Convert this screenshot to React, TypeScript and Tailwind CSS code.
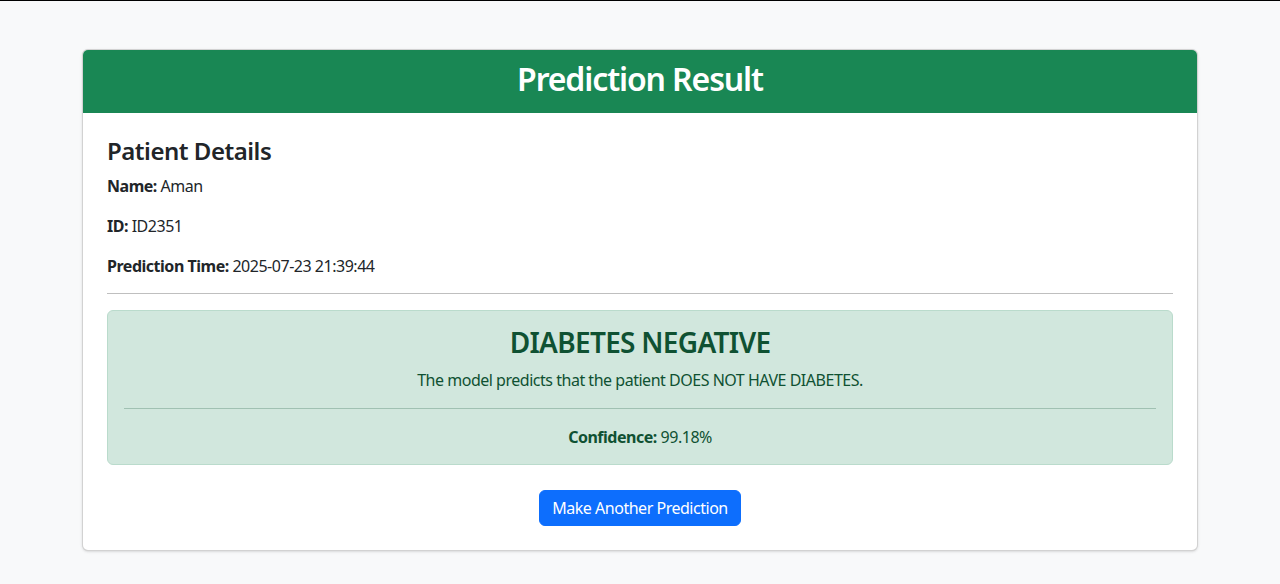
const App = () => {
  return (
    <div className="min-h-[584px] border-t border-black bg-[#f8f9fa] font-['Noto_Sans',sans-serif] tracking-[-0.03em] text-[#212529]">
      <div className="mx-auto max-w-[1140px] px-3 pt-12">
        <div className="overflow-hidden rounded-md border border-black/[.175] bg-white shadow-sm">
          <div className="bg-[#198754] pt-[10px] pb-[15px] text-center">
            <h2 className="text-[32px] leading-[38.4px] font-semibold tracking-[-0.035em] text-white">Prediction Result</h2>
          </div>
          <div className="p-6">
            <h4 className="mb-2 text-2xl leading-[28.8px] font-semibold">Patient Details</h4>
            <p className="mb-4 text-base leading-6">
              <strong className="font-bold">Name:</strong> Aman
            </p>
            <p className="mb-4 text-base leading-6">
              <strong className="font-bold">ID:</strong> ID2351
            </p>
            <p className="mb-[15px] text-base leading-6">
              <strong className="font-bold">Prediction Time:</strong> 2025-07-23 21:39:44
            </p>
            <hr className="mb-4 border-t border-black/25" />
            <div className="rounded-md border border-[#badbcc] bg-[#d1e7dd] px-4 py-[15px] text-center text-[#0f5132]">
              <h3 className="mb-2 text-[28px] leading-[33.6px] font-semibold tracking-[-0.025em]">DIABETES NEGATIVE</h3>
              <p className="mb-4 text-base leading-6">
                The model predicts that the patient DOES NOT HAVE DIABETES.
              </p>
              <hr className="mb-4 border-t border-[#0f5132]/25" />
              <p className="text-base leading-6">
                <strong className="font-bold">Confidence:</strong> 99.18%
              </p>
            </div>
            <div className="mt-[25px] text-center">
              <button className="rounded-md border border-[#0d6efd] bg-[#0d6efd] px-3 py-[5px] text-base leading-6 text-white">
                Make Another Prediction
              </button>
            </div>
          </div>
        </div>
      </div>
    </div>
  );
};

export default App;
